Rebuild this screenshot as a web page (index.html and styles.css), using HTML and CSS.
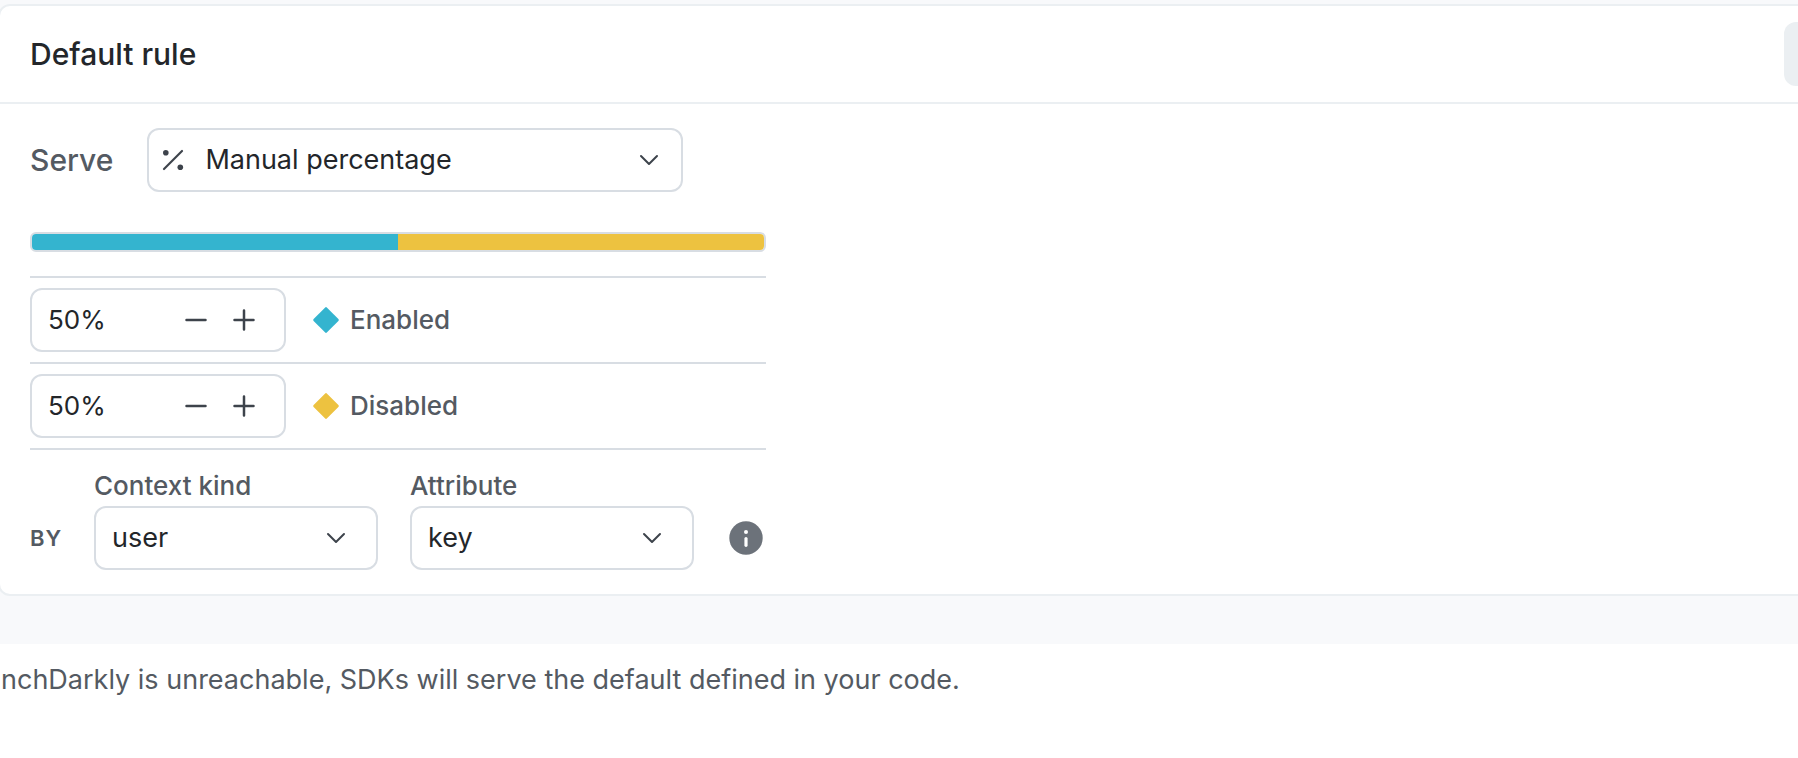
FILE: index.html
```html
<!DOCTYPE html>
<html lang="en">
<head>
<meta charset="utf-8">
<title>Default rule</title>
<link rel="stylesheet" href="styles.css">
</head>
<body>
<main class="page">
  <div class="canvas">
    <section class="card">
      <header class="card-header">
        <h2 class="card-title">Default rule</h2>
        <button class="menu-button" type="button" aria-label="Rule options"></button>
      </header>
      <div class="card-body">
        <div class="serve-row">
          <label class="serve-label" for="serve">Serve</label>
          <div class="select-box select-box-wide">
            <svg class="percent-icon" viewBox="0 0 24 24" aria-hidden="true"><path d="M3 21 21 3" fill="none" stroke="currentColor" stroke-width="2.200" stroke-linecap="round"/><circle cx="4.800" cy="4.800" r="2.800"/><circle cx="19.300" cy="19.300" r="2.800"/></svg>
            <select class="select" id="serve"><option>Manual percentage</option></select>
            <svg class="chevron" viewBox="0 0 20 12" aria-hidden="true"><path d="M2 2 10 10 18 2"/></svg>
          </div>
        </div>

        <div class="rollout">
          <div class="bar">
            <div class="bar-part enabled" style="width:50%"></div>
            <div class="bar-part disabled" style="width:50%"></div>
          </div>

          <div class="variations">
            <div class="variation">
              <div class="stepper">
                <input class="stepper-input" id="enabled" type="text" value="50%">
                <button class="stepper-button" type="button" aria-label="Decrease Enabled"><svg class="stepper-icon" viewBox="0 0 24 24"><path d="M2.500 12H21.500"/></svg></button>
                <button class="stepper-button" type="button" aria-label="Increase Enabled"><svg class="stepper-icon" viewBox="0 0 24 24"><path d="M2.500 12H21.500M12 2.500V21.500"/></svg></button>
              </div>
              <label class="variation-name" for="enabled"><svg class="diamond enabled" viewBox="0 0 28 28" aria-hidden="true"><rect x="4.500" y="4.500" width="19" height="19" rx="1.500" transform="rotate(45 14 14)"/></svg>Enabled</label>
            </div>
            <div class="variation">
              <div class="stepper">
                <input class="stepper-input" id="disabled" type="text" value="50%">
                <button class="stepper-button" type="button" aria-label="Decrease Disabled"><svg class="stepper-icon" viewBox="0 0 24 24"><path d="M2.500 12H21.500"/></svg></button>
                <button class="stepper-button" type="button" aria-label="Increase Disabled"><svg class="stepper-icon" viewBox="0 0 24 24"><path d="M2.500 12H21.500M12 2.500V21.500"/></svg></button>
              </div>
              <label class="variation-name" for="disabled"><svg class="diamond disabled" viewBox="0 0 28 28" aria-hidden="true"><rect x="4.500" y="4.500" width="19" height="19" rx="1.500" transform="rotate(45 14 14)"/></svg>Disabled</label>
            </div>
          </div>

          <div class="by-row">
            <span class="by">BY</span>
            <div class="field">
              <label class="field-label" for="kind">Context kind</label>
              <div class="select-box">
                <select class="select" id="kind"><option>user</option></select>
                <svg class="chevron" viewBox="0 0 20 12" aria-hidden="true"><path d="M2 2 10 10 18 2"/></svg>
              </div>
            </div>
            <div class="field">
              <label class="field-label" for="attribute">Attribute</label>
              <div class="select-box">
                <select class="select" id="attribute"><option>key</option></select>
                <svg class="chevron" viewBox="0 0 20 12" aria-hidden="true"><path d="M2 2 10 10 18 2"/></svg>
              </div>
            </div>
            <button class="info" type="button" aria-label="About rollout attributes"><svg class="info-icon" viewBox="0 0 40 40"><circle cx="20" cy="20" r="16.700" fill="#6c727a"/><circle cx="20" cy="14" r="2" fill="#fff"/><path d="M20 20.500V27.300" stroke="#fff" stroke-width="3.200" stroke-linecap="round"/></svg></button>
          </div>
        </div>
      </div>
    </section>
  </div>
  <p class="note">nchDarkly is unreachable, SDKs will serve the default defined in your code.</p>
</main>
</body>
</html>
```
FILE: styles.css
```css
* {
  box-sizing: border-box;
}

body {
  margin: 0;
  background: #fff;
  color: #23262a;
  font: 27px/40px Inter, sans-serif;
}

button,
input,
select {
  margin: 0;
  padding: 0;
  border: 0;
  background: none;
  color: inherit;
  font: inherit;
}

.page {
  overflow: hidden;
}

.canvas {
  padding: 4px 0 48px;
  background: #f8f9fb;
}

.card {
  margin: 0 -82px 0 -2px;
  border: 2px solid #ebeff2;
  border-radius: 12px;
  background: #fff;
}

.card-header {
  display: flex;
  align-items: center;
  justify-content: space-between;
  padding: 16px 30px;
  border-bottom: 2px solid #ebeff2;
}

.card-title {
  margin: 0;
  font-size: 30px;
  font-weight: 500;
}

.menu-button {
  width: 64px;
  height: 64px;
  border-radius: 12px;
  background: #ebeff2;
}

.card-body {
  padding: 24px 30px;
}

.serve-row {
  display: flex;
  align-items: center;
  gap: 34px;
}

.serve-label {
  color: #545a62;
  font-size: 30px;
  font-weight: 500;
}

.select-box {
  display: grid;
  grid-template-columns: 1fr;
  align-items: center;
  width: 284px;
  height: 64px;
  border: 2px solid #d8dde3;
  border-radius: 12px;
}

.select-box > * {
  grid-area: 1 / 1;
}

.select-box-wide {
  width: 536px;
}

.select {
  width: 100%;
  height: 60px;
  padding: 0 56px 0 16px;
  appearance: none;
}

.select-box-wide .select {
  padding-left: 56px;
}

.chevron {
  justify-self: end;
  width: 20px;
  height: 12px;
  margin-right: 30px;
  fill: none;
  stroke: #3d434b;
  stroke-width: 2;
  stroke-linecap: round;
  stroke-linejoin: round;
  pointer-events: none;
}

.select-box-wide .chevron {
  margin-right: 22px;
}

.percent-icon {
  width: 24px;
  height: 24px;
  margin-left: 12px;
  color: #3d434b;
  fill: currentColor;
  pointer-events: none;
}

.rollout {
  max-width: 736px;
  margin-top: 40px;
}

.bar {
  display: flex;
  height: 20px;
  overflow: hidden;
  border: 2px solid #d8dde3;
  border-radius: 6px;
}

.enabled {
  background: #34b4cf;
  fill: #34b4cf;
}

.disabled {
  background: #edc240;
  fill: #edc240;
}

.variations {
  margin-top: 24px;
  border-top: 2px solid #d8dde3;
}

.variation {
  display: flex;
  align-items: center;
  gap: 26px;
  padding: 10px 0;
  border-bottom: 2px solid #d8dde3;
}

.stepper {
  display: flex;
  align-items: center;
  width: 256px;
  height: 64px;
  padding: 0 16px;
  border: 2px solid #d8dde3;
  border-radius: 12px;
}

.stepper-input {
  flex: 1;
  width: 0;
  font-size: 26px;
}

.stepper-button {
  display: grid;
  place-items: center;
  width: 48px;
  height: 48px;
}

.stepper-icon {
  width: 24px;
  height: 24px;
  fill: none;
  stroke: #3d434b;
  stroke-width: 2.5;
  stroke-linecap: round;
}

.variation-name {
  display: flex;
  align-items: center;
  gap: 10px;
  color: #545a62;
  font-size: 26px;
  font-weight: 500;
}

.diamond {
  width: 28px;
  height: 28px;
  background: none;
}

.by-row {
  display: flex;
  align-items: flex-end;
  margin-top: 16px;
}

.by {
  width: 64px;
  color: #545a62;
  font-size: 22px;
  font-weight: 600;
  letter-spacing: 1px;
  line-height: 64px;
}

.field {
  display: grid;
  margin-right: 32px;
}

.field-label {
  color: #545a62;
  font-size: 26px;
  font-weight: 500;
}

.info {
  height: 64px;
  margin-left: auto;
}

.info-icon {
  display: block;
  width: 40px;
  height: 40px;
}

.note {
  margin: 0;
  padding: 16px 1px;
  color: #545a62;
  white-space: nowrap;
}
```
